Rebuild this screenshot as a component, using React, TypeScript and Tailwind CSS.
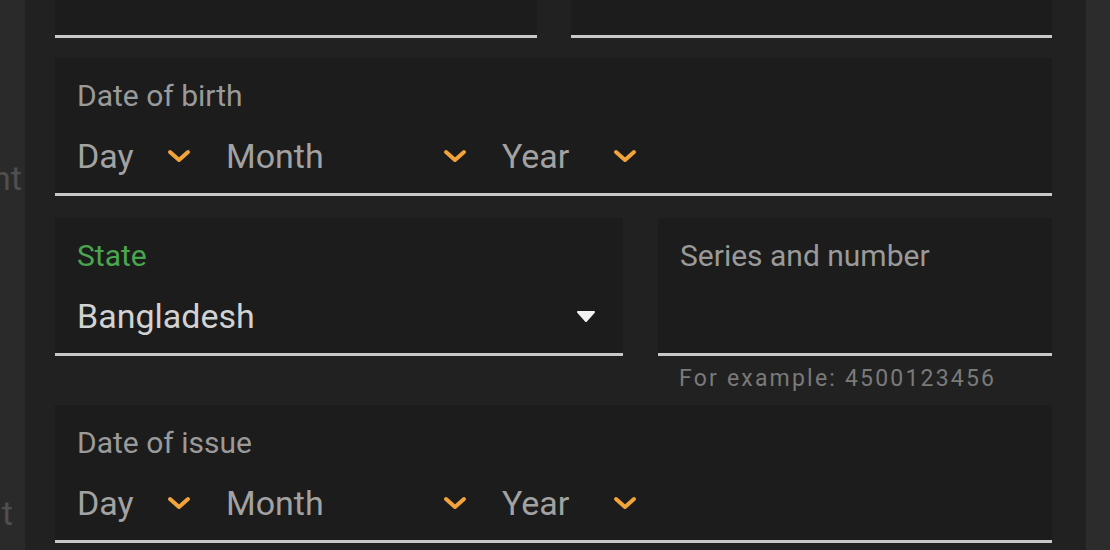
import React from "react";

const Chevron = () => (
  <svg width="26" height="16" viewBox="0 0 26 16" className="shrink-0">
    <polyline points="4,4 13,12 22,4" fill="none" stroke="#f2a33a" strokeWidth="4" strokeLinecap="round" strokeLinejoin="round" />
  </svg>
);

const Triangle = () => (
  <svg width="20" height="12" viewBox="0 0 20 12" className="shrink-0">
    <path d="M2 2 L18 2 L10 11 Z" fill="#f2f2f2" stroke="#f2f2f2" strokeWidth="2" strokeLinejoin="round" />
  </svg>
);

const Field = ({ className = "", children }: { className?: string; children?: React.ReactNode }) => (
  <div className={`h-[138px] bg-[#1c1c1c] border-b-[3px] border-[#c8c8c8] px-[22px] flex flex-col ${className}`}>
    {children}
  </div>
);

const Label = ({ text, color = "text-[#9a9a9a]" }: { text: string; color?: string }) => (
  <div className={`pt-[20px] text-[30px] leading-[36px] ${color}`}>{text}</div>
);

const DateRow = () => (
  <div className="mt-[22px] flex items-center gap-[34px] text-[34px] leading-[40px] text-[#a2a2a2]">
    <div className="w-[115px] flex items-center justify-between">
      <span>Day</span>
      <Chevron />
    </div>
    <div className="w-[242px] flex items-center justify-between">
      <span>Month</span>
      <Chevron />
    </div>
    <div className="w-[136px] flex items-center justify-between">
      <span>Year</span>
      <Chevron />
    </div>
  </div>
);

export default function App() {
  return (
    <div
      className="w-[1110px] h-[550px] flex overflow-hidden bg-[#202020]"
      style={{ fontFamily: "Roboto, 'Noto Sans', sans-serif" }}
    >
      <div className="w-[25px] shrink-0 bg-[#2a2a2a] flex flex-col overflow-hidden text-[#4f4f4f] text-[34px] leading-[40px]">
        <div className="mt-[158px] flex justify-end pr-[3px] whitespace-nowrap">Document</div>
        <div className="mt-[295px] flex justify-end pr-[12px] whitespace-nowrap">Consent</div>
      </div>
      <div className="w-[1061px] shrink-0 bg-[#212121] pl-[30px] pr-[34px] flex flex-col">
        <div className="mt-[-100px] flex gap-[34px]">
          <Field className="w-[482px]" />
          <Field className="flex-1" />
        </div>
        <Field className="mt-[20px]">
          <Label text="Date of birth" />
          <DateRow />
        </Field>
        <div className="mt-[22px] flex gap-[35px]">
          <Field className="w-[568px] pr-[27px]">
            <Label text="State" color="text-[#4aa64e]" />
            <div className="mt-[22px] flex items-center justify-between text-[34px] leading-[40px] text-[#d2d2d2]">
              <span>Bangladesh</span>
              <Triangle />
            </div>
          </Field>
          <div className="flex-1 flex flex-col">
            <Field>
              <Label text="Series and number" />
            </Field>
            <div className="h-[49px] pl-[21px] pt-[9px] text-[23px] leading-[28px] tracking-[2.2px] text-[#7a7a7a]">
              For example: 4500123456
            </div>
          </div>
        </div>
        <Field>
          <Label text="Date of issue" />
          <DateRow />
        </Field>
      </div>
      <div className="flex-1 bg-[#2c2c2c]" />
    </div>
  );
}
